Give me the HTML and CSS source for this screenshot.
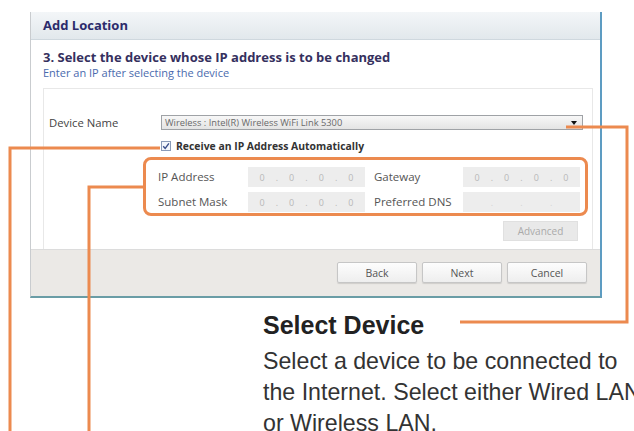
FILE: index.html
```html
<!DOCTYPE html>
<html lang="en">
<head>
    <meta charset="UTF-8">
    <meta name="viewport" content="width=device-width, initial-scale=1.0">
    <title>Add Location - Select Device</title>
    <link rel="stylesheet" href="styles.css">
</head>
<body>
    <div class="page">

        <!-- 대화상자 -->
        <div class="dialog">
            <div class="dialog-head">Add Location</div>

            <div class="dialog-body">
                <h1 class="step-title">3. Select the device whose IP address is to be changed</h1>
                <p class="step-sub">Enter an IP after selecting the device</p>

                <div class="panel">
                    <div class="row-device">
                        <span class="lbl-device">Device Name</span>
                        <div class="select">
                            <span>Wireless : Intel(R) Wireless WiFi Link 5300</span>
                            <span class="arrow"></span>
                        </div>
                    </div>

                    <label class="chk-row">
                        <svg class="chk" width="10" height="10" viewBox="0 0 10 10">
                            <rect x="0.5" y="0.5" width="9" height="9" fill="#f3f6fb" stroke="#8a9bb8"/>
                            <path d="M2.2 5.2 L4.2 7.4 L7.9 2.4" fill="none" stroke="#3a4f8a" stroke-width="1.4"/>
                        </svg>
                        Receive an IP Address Automatically
                    </label>

                    <!-- 주황 테두리 영역 -->
                    <div class="ip-grid">
                        <span class="lbl">IP Address</span>
                        <span class="field"><i>0</i>.<i>0</i>.<i>0</i>.<i>0</i></span>
                        <span class="lbl">Gateway</span>
                        <span class="field"><i>0</i>.<i>0</i>.<i>0</i>.<i>0</i></span>

                        <span class="lbl">Subnet Mask</span>
                        <span class="field"><i>0</i>.<i>0</i>.<i>0</i>.<i>0</i></span>
                        <span class="lbl">Preferred DNS</span>
                        <span class="field empty"><i></i>.<i></i>.<i></i>.<i></i></span>
                    </div>

                    <div class="adv-row">
                        <button class="btn-adv" disabled>Advanced</button>
                    </div>
                </div>
            </div>

            <div class="dialog-foot">
                <button class="btn">Back</button>
                <button class="btn">Next</button>
                <button class="btn">Cancel</button>
            </div>
        </div>

        <!-- 설명글 -->
        <div class="callout">
            <h2>Select Device</h2>
            <p>Select a device to be connected to<br>
            the Internet. Select either Wired LAN<br>
            or Wireless LAN.</p>
        </div>

        <!-- 안내선 (위에 겹쳐 그림) -->
        <svg class="leader" width="634" height="431" viewBox="0 0 634 431">
            <polyline points="160,148 10,148 10,431" />
            <polyline points="143,187 89,187 89,431" />
            <polyline points="566,127 627,127 627,322 460,322" />
        </svg>
    </div>
</body>
</html>
```

FILE: styles.css
```css
/* 기본 */
* {
    box-sizing: border-box;
}

body {
    margin: 0;
    background: #fff;
}

.page {
    position: relative;
    width: 634px;
    height: 431px;
    overflow: hidden;
    padding-top: 12px;
}

/* 대화상자 */
.dialog {
    margin-left: 30px;
    width: 572px;
    border-left: 1px solid #c9cccf;
    border-right: 2px solid #5d9cc2;
    border-bottom: 2px solid #6a9da6;
    font-family: "Open Sans", "DejaVu Sans", sans-serif;
}

.dialog-head {
    height: 28px;
    padding-left: 12px;
    line-height: 27px;
    font-size: 13px;
    font-weight: bold;
    color: #2c2b6b;
    background: linear-gradient(#f3f6f8, #e2e8ec);
    border-bottom: 1px solid #cfd8de;
}

.dialog-body {
    padding: 9px 7px 0 12px;
}

.step-title {
    margin: 0;
    font-size: 13px;
    line-height: 16px;
    color: #35305e;
}

.step-sub {
    margin: 1px 0 0;
    font-size: 11px;
    line-height: 13px;
    color: #4a6aae;
}

/* 흰 패널 */
.panel {
    margin-top: 9px;
    height: 161px;
    padding: 26px 0 0 5px;
    background: #fff;
    border: 1px solid #e8e8e8;
    border-bottom: none;
}

.row-device {
    display: flex;
    align-items: center;
}

.lbl-device {
    width: 112px;
    font-size: 11.3px;
    color: #444;
}

.select {
    position: relative;
    width: 422px;
    height: 15px;
    padding-left: 3px;
    border: 1px solid #9fa2a6;
    background: linear-gradient(#f7f7f7, #e4e4e4);
    font-size: 9.3px;
    line-height: 13px;
    color: #6a6a6a;
}

.select .arrow {
    position: absolute;
    right: 5px;
    top: 5px;
    border-left: 3px solid transparent;
    border-right: 3px solid transparent;
    border-top: 4px solid #111;
}

.chk-row {
    display: flex;
    align-items: center;
    gap: 5px;
    margin: 10px 0 0 112px;
    height: 12px;
    font-size: 10.4px;
    font-weight: bold;
    color: #333;
}

/* IP 입력 그리드 */
.ip-grid {
    display: grid;
    grid-template-columns: 102px 117px 98px 117px;
    grid-auto-rows: 20px;
    row-gap: 5px;
    margin: 5px 0 0 94px;
    width: 445px;
    height: 59px;
    padding: 7px 5px 0 0;
    border: 3px solid #ec8a4f;
    border-radius: 8px;
    font-size: 11.5px;
}

.ip-grid .lbl {
    line-height: 20px;
    color: #555;
}

.ip-grid .lbl:nth-child(4n+1) {
    padding-left: 12px;
}

.ip-grid .lbl:nth-child(4n+3) {
    padding-left: 9px;
}

.field {
    display: flex;
    justify-content: space-around;
    align-items: center;
    padding: 0 6px;
    background: #ededed;
    font-size: 9px;
    color: #b8b8b8;
}

.field i {
    font-style: normal;
    min-width: 5px;
    text-align: center;
}

.field.empty {
    color: #d4d4d4;
}

.adv-row {
    display: flex;
    justify-content: flex-end;
    margin: 5px 14px 0 0;
}

.btn-adv {
    width: 75px;
    height: 20px;
    border: 1px solid #e0e0e0;
    background: #e9e9e9;
    font-family: inherit;
    font-size: 10px;
    color: #aaa;
}

/* 하단 버튼 영역 */
.dialog-foot {
    display: flex;
    justify-content: flex-end;
    gap: 5px;
    height: 47px;
    padding: 12px 13px 0 0;
    background: #ebe9e6;
    border-top: 1px solid #dcdcdc;
}

.btn {
    width: 80px;
    height: 21px;
    border: 1px solid #c6c6c6;
    border-radius: 2px;
    background: linear-gradient(#fdfdfd, #eeeeee);
    box-shadow: 0 1px 1px rgba(0, 0, 0, 0.12);
    font-family: inherit;
    font-size: 10.5px;
    color: #555;
}

/* 설명글 */
.callout {
    margin: 12px 0 0 263px;
    font-family: "Liberation Sans", Arial, sans-serif;
}

.callout h2 {
    margin: 0;
    font-size: 25px;
    line-height: 30px;
    color: #222;
}

.callout p {
    margin: 6px 0 0;
    white-space: nowrap;
    font-size: 23.2px;
    line-height: 31px;
    color: #333;
}

/* 안내선 */
.leader {
    position: absolute;
    left: 0;
    top: 0;
    pointer-events: none;
}

.leader polyline {
    fill: none;
    stroke: #ec8a4f;
    stroke-width: 3;
}
```
